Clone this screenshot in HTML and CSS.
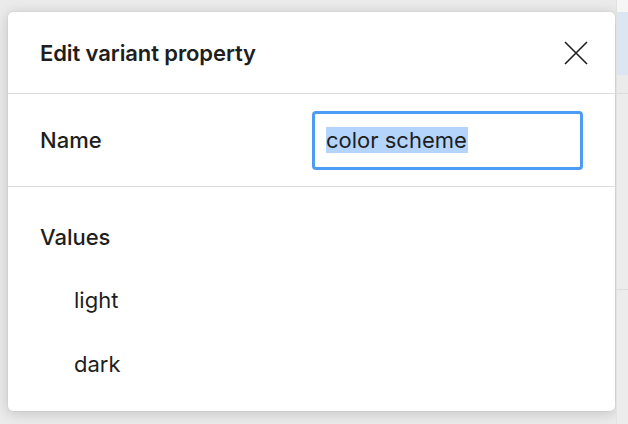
FILE: index.html
```html
<!DOCTYPE html>
<html>
<head>
<meta charset="utf-8">
<link rel="stylesheet" href="styles.css">
</head>
<body>
<div class="app">
  <div class="stage">
    <div class="dialog">
      <div class="header">
        <div class="title">Edit variant property</div>
        <svg class="close" width="24" height="24" viewBox="0 0 24 24"><path d="M1 1 L23 23 M23 1 L1 23" stroke="#1f1f1f" stroke-width="1.6" fill="none"/></svg>
      </div>
      <div class="row name-row">
        <div class="label">Name</div>
        <div class="input"><span class="sel">color scheme</span></div>
      </div>
      <div class="values">
        <div class="label vlabel">Values</div>
        <div class="value">light</div>
        <div class="value">dark</div>
      </div>
    </div>
  </div>
  <div class="side">
    <div class="side-top"></div>
    <div class="side-sel"></div>
    <div class="side-row"></div>
    <div class="side-row2"></div>
    <div class="side-rest"></div>
  </div>
</div>
</body>
</html>
```
FILE: styles.css
```css
html, body { margin: 0; padding: 0; }
body { font-family: Inter, "Noto Sans", sans-serif; color: #1e1e1e; background: #ececec; }
.app { display: flex; width: 628px; height: 424px; overflow: hidden; }
.stage { flex: 0 0 616px; box-sizing: border-box; padding: 12px 1px 13px 8px; background: #ebebeb; }
.dialog { height: 100%; background: #fff; border-radius: 5px; box-shadow: 0 2px 14px rgba(0,0,0,0.18), 0 0 2px rgba(0,0,0,0.1); display: flex; flex-direction: column; }
.header { height: 81px; display: flex; align-items: center; justify-content: space-between; padding: 0 27px 0 32px; border-bottom: 1px solid #dddddd; flex: none; }
.title { font-size: 22px; font-weight: 600; letter-spacing: -0.1px; }
.close { display: block; }
.name-row { height: 92px; display: flex; align-items: center; justify-content: space-between; padding: 0 32px; border-bottom: 1px solid #dddddd; flex: none; }
.label { font-size: 22px; font-weight: 500; }
.input { width: 271px; height: 59px; box-sizing: border-box; border: 3px solid #4c9bf4; border-radius: 4px; display: flex; align-items: center; padding-left: 11px; font-size: 22px; }
.sel { background: #b4d4fc; line-height: 26px; padding-right: 1px; }
.values { padding: 22px 32px 0; }
.vlabel { height: 56px; line-height: 56px; margin-bottom: 3px; }
.value { font-size: 22px; height: 64px; line-height: 64px; padding-left: 34px; }
.side { flex: 1; display: flex; flex-direction: column; border-left: 1px solid #e2e2e2; background: #ececec; }
.side-top { height: 12px; background: #f6f6f6; }
.side-sel { height: 63px; background: #dbe6f2; }
.side-row { height: 18px; background: #ebebeb; border-bottom: 1px solid #dcdcdc; }
.side-row2 { height: 195px; border-bottom: 1px solid #dcdcdc; }
.side-rest { flex: 1; }
```
